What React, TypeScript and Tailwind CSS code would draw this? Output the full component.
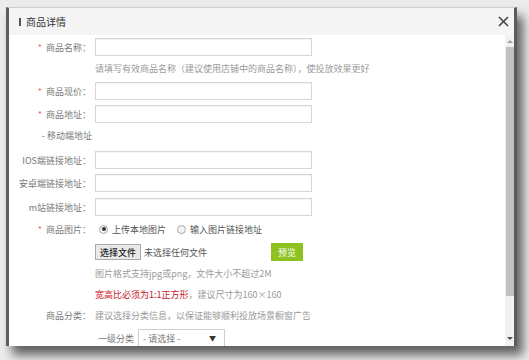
const font = { fontFamily: '"Noto Sans CJK SC", "Noto Sans", sans-serif' };

const Label = ({ text, req }: { text: string; req?: boolean }) => (
  <div className="w-[83px] shrink-0 pr-[1px] text-right text-[#7a7a7a]">
    {req && <span className="mr-[4px] text-[#ee6b5f]">*</span>}
    {text}：
  </div>
);

const Field = ({ label, req, mt }: { label: string; req?: boolean; mt: string }) => (
  <div className={`flex h-[18px] items-center ${mt}`}>
    <Label text={label} req={req} />
    <div className="ml-[3px] h-[18px] w-[217px] border border-[#d6d6d6] bg-white shadow-[inset_0_1px_1px_rgba(0,0,0,0.05)]" />
  </div>
);

const Radio = ({ checked }: { checked?: boolean }) => (
  <span className="flex h-[9px] w-[9px] items-center justify-center rounded-full border border-[#a8a8a8] bg-[#f4f4f4]">
    {checked && <span className="h-[4px] w-[4px] rounded-full bg-[#333]" />}
  </span>
);

export default function App() {
  return (
    <div className="h-[360px] w-[529px] overflow-hidden bg-[#ececec] pl-[6px] pt-[7px] text-[9px] leading-none" style={font}>
      <div className="flex h-[339px] w-[511px] flex-col border-x-[3px] border-t border-x-[#5c5c5c] border-t-[#cfcfcf] bg-white shadow-[6px_9px_10px_rgba(0,0,0,0.6)]">
        <div className="flex h-[27px] shrink-0 items-center bg-[#f5f5f5] pl-[10px] pr-[5px]">
          <span className="h-[8px] w-[2px] bg-[#555]" />
          <span className="ml-[5px] text-[10px] text-[#333]">商品详情</span>
          <svg className="ml-auto" width="11" height="11" viewBox="0 0 11 11">
            <path d="M1 1L10 10M10 1L1 10" stroke="#444" strokeWidth="1.6" />
          </svg>
        </div>
        <div className="flex min-h-0 flex-1">
          <div className="flex-1 overflow-hidden">
            <Field label="商品名称" req mt="mt-[3px]" />
            <div className="flex h-[24px] items-center pl-[86px] text-[#9a9a9a]">
              请填写有效商品名称（建议使用店铺中的商品名称），使投放效果更好
            </div>
            <Field label="商品现价" req mt="mt-[2px]" />
            <Field label="商品地址" req mt="mt-[5px]" />
            <div className="flex h-[24px] items-center">
              <div className="w-[83px] text-right text-[#7a7a7a]">- 移动端地址</div>
            </div>
            <Field label="IOS端链接地址" mt="mt-[4px]" />
            <Field label="安卓端链接地址" mt="mt-[5px]" />
            <Field label="m站链接地址" mt="mt-[6px]" />
            <div className="flex h-[26px] items-center">
              <Label text="商品图片" req />
              <div className="ml-[7px] flex items-center gap-[4px] text-[#555]">
                <Radio checked />
                <span>上传本地图片</span>
                <span className="ml-[3px]" />
                <Radio />
                <span>输入图片链接地址</span>
              </div>
            </div>
            <div className="mt-[1px] flex h-[18px] items-center pl-[86px]">
              <span className="flex h-[16px] items-center border border-[#a9a9a9] bg-[#e9e9e9] px-[4px] font-medium text-[#222]">
                选择文件
              </span>
              <span className="ml-[3px] text-[#555]">未选择任何文件</span>
              <span className="ml-[64px] flex h-[18px] w-[32px] items-center justify-center bg-[#8dc21f] text-white">
                预览
              </span>
            </div>
            <div className="flex h-[24px] items-center pl-[86px] text-[#9a9a9a]">
              图片格式支持jpg或png，文件大小不超过2M
            </div>
            <div className="flex h-[18px] items-center pl-[86px] text-[#9a9a9a]">
              <span className="text-[#c8161d]">宽高比必须为1:1正方形</span>，建议尺寸为160×160
            </div>
            <div className="flex h-[24px] items-center">
              <Label text="商品分类" />
              <span className="ml-[3px] text-[#9a9a9a]">建议选择分类信息，以保证能够顺利投放场景橱窗广告</span>
            </div>
            <div className="mt-[2px] flex h-[18px] items-center pl-[89px]">
              <span className="text-[#7a7a7a]">一级分类</span>
              <div className="ml-[4px] flex h-[18px] w-[87px] items-center border border-[#cfcfcf] pl-[4px] pr-[8px] text-[#7a7a7a]">
                - 请选择 -
                <span className="ml-auto text-[7px] text-[#333]">▼</span>
              </div>
            </div>
          </div>
          <div className="flex w-[9px] shrink-0 flex-col bg-[#f1f1f1]">
            <div className="flex h-[12px] items-center justify-center">
              <span className="h-0 w-0 border-x-[3px] border-b-[3px] border-x-transparent border-b-[#a3a3a3]" />
            </div>
            <div className="ml-[1px] h-[249px] bg-[#c1c1c1]" />
            <div className="flex flex-1 items-end justify-center pb-[6px]">
              <span className="h-0 w-0 border-x-[3px] border-t-[3px] border-x-transparent border-t-[#505050]" />
            </div>
          </div>
        </div>
      </div>
    </div>
  );
}
